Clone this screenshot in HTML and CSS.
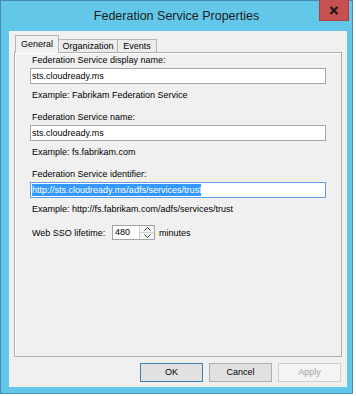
FILE: index.html
```html
<!DOCTYPE html>
<html>
	<head>
		<meta charset="UTF-8">
		<title>Federation Service Properties</title>
		<link rel="stylesheet" href="styles.css">
	</head>
	<body>
		<div class="window">
			<div class="titlebar">Federation Service Properties</div>
			<a href="javascript:;" class="close">
				<svg width="10" height="9" viewBox="0 0 10 9"><path d="M1.5 1 L8.5 8 M8.5 1 L1.5 8" stroke="#1a1a1a" stroke-width="2.2"/></svg>
			</a>
			<div class="client">
				<div class="tabs">
					<a href="javascript:;" class="tab active">General</a>
					<a href="javascript:;" class="tab">Organization</a>
					<a href="javascript:;" class="tab">Events</a>
				</div>
				<div class="panel">
					<div class="group">
						<label>Federation Service display name:</label>
						<div class="field">sts.cloudready.ms</div>
						<p>Example: Fabrikam Federation Service</p>
					</div>
					<div class="group">
						<label>Federation Service name:</label>
						<div class="field">sts.cloudready.ms</div>
						<p>Example: fs.fabrikam.com</p>
					</div>
					<div class="group">
						<label>Federation Service identifier:</label>
						<div class="field focus"><span class="sel">http://sts.cloudready.ms/adfs/services/trust</span></div>
						<p>Example: http://fs.fabrikam.com/adfs/services/trust</p>
					</div>
					<div class="sso">
						<span class="ssolabel">Web SSO lifetime:</span>
						<div class="spin">
							<div class="spinval">480</div>
							<div class="arrows">
								<span><svg width="7" height="4" viewBox="0 0 7 4"><path d="M0.5 3.5 L3.5 0.5 L6.5 3.5" fill="none" stroke="#333" stroke-width="1"/></svg></span>
								<span><svg width="7" height="4" viewBox="0 0 7 4"><path d="M0.5 0.5 L3.5 3.5 L6.5 0.5" fill="none" stroke="#333" stroke-width="1"/></svg></span>
							</div>
						</div>
						<span class="unit">minutes</span>
					</div>
				</div>
				<div class="buttons">
					<a href="javascript:;" class="btn default">OK</a>
					<a href="javascript:;" class="btn">Cancel</a>
					<a href="javascript:;" class="btn disabled">Apply</a>
				</div>
			</div>
		</div>
	</body>
</html>
```

FILE: styles.css
```css
*{
	margin: 0;
	padding: 0;
	box-sizing: border-box;
}
body{
	background: #fff;
	font-family: "Liberation Sans", Arial, sans-serif;
	font-size: 9px;
	color: #000;
}
a{
	text-decoration: none;
	color: #000;
}
.window{
	position: relative;
	width: 353px;
	height: 394px;
	border: 1px solid #4a89ad;
	background: #63c7e9;
	padding: 0 5px 6px 8px;
	display: flex;
	flex-direction: column;
}
.titlebar{
	height: 30px;
	margin: 0 -5px 0 -8px;
	text-align: center;
	font-size: 12.5px;
	line-height: 30px;
	color: #1e1e1e;
}
.close{
	position: absolute;
	top: -1px;
	right: 3px;
	width: 30px;
	height: 21px;
	background: #c75050;
	border: 1px solid #a94440;
	border-top: none;
	display: flex;
	align-items: center;
	justify-content: center;
}
.client{
	flex: 1;
	background: #f0f0f0;
	display: flex;
	flex-direction: column;
	padding: 0 5px 5px 5px;
}
.tabs{
	display: flex;
	align-items: flex-end;
	margin: 4px 0 0 1px;
	position: relative;
	z-index: 2;
}
.tab{
	height: 13px;
	border: 1px solid #b4b4b4;
	border-bottom: none;
	background: #ececec;
	line-height: 12px;
	text-align: center;
	margin-left: -1px;
}
.tab:nth-child(2){
	width: 60px;
}
.tab:nth-child(3){
	width: 40px;
}
.tab.active{
	width: 44px;
	height: 18px;
	margin-left: 0;
	margin-bottom: -1px;
	padding-top: 2px;
	background: #f0f0f0;
	position: relative;
	z-index: 3;
}
.panel{
	flex: 1;
	border: 1px solid #adadad;
	box-shadow: inset 1px 1px 0 #fff;
	background: #f0f0f0;
	padding: 1px 15px 0 15px;
}
.group{
	margin-bottom: 10px;
}
.group label{
	display: block;
	height: 12px;
	line-height: 12px;
	padding-left: 2px;
	margin-bottom: 2px;
}
.field{
	height: 16px;
	border: 1px solid #a5a5a5;
	background: #fff;
	line-height: 14px;
	padding-left: 1px;
	white-space: nowrap;
	overflow: hidden;
}
.field.focus{
	border-color: #5d9ee0;
}
.sel{
	display: inline-block;
	background: #3399ff;
	color: #fff;
	line-height: 12px;
	margin-top: 1px;
}
.group p{
	height: 12px;
	line-height: 12px;
	padding-left: 2px;
	margin-top: 5px;
}
.sso{
	display: flex;
	align-items: center;
	padding-left: 2px;
	height: 15px;
}
.ssolabel{
	width: 80px;
}
.spin{
	display: flex;
	height: 15px;
	border: 1px solid #a5a5a5;
	background: #fff;
}
.spinval{
	width: 27px;
	line-height: 13px;
	padding-left: 2px;
	border-right: 1px solid #d0d0d0;
}
.arrows{
	width: 14px;
	display: flex;
	flex-direction: column;
}
.arrows span{
	flex: 1;
	display: flex;
	align-items: center;
	justify-content: center;
	background: #f4f4f4;
}
.arrows span:first-child{
	border-bottom: 1px solid #d0d0d0;
}
.unit{
	margin-left: 4px;
}
.buttons{
	display: flex;
	justify-content: flex-end;
	gap: 6px;
	margin-top: 6px;
	padding-right: 1px;
}
.btn{
	width: 63px;
	height: 19px;
	line-height: 17px;
	text-align: center;
	border: 1px solid #adadad;
	background: #e1e1e1;
}
.btn.default{
	border-color: #3c7fb1;
}
.btn.disabled{
	border-color: #cfcfcf;
	background: #f4f4f4;
	color: #a3a3a3;
}
```
